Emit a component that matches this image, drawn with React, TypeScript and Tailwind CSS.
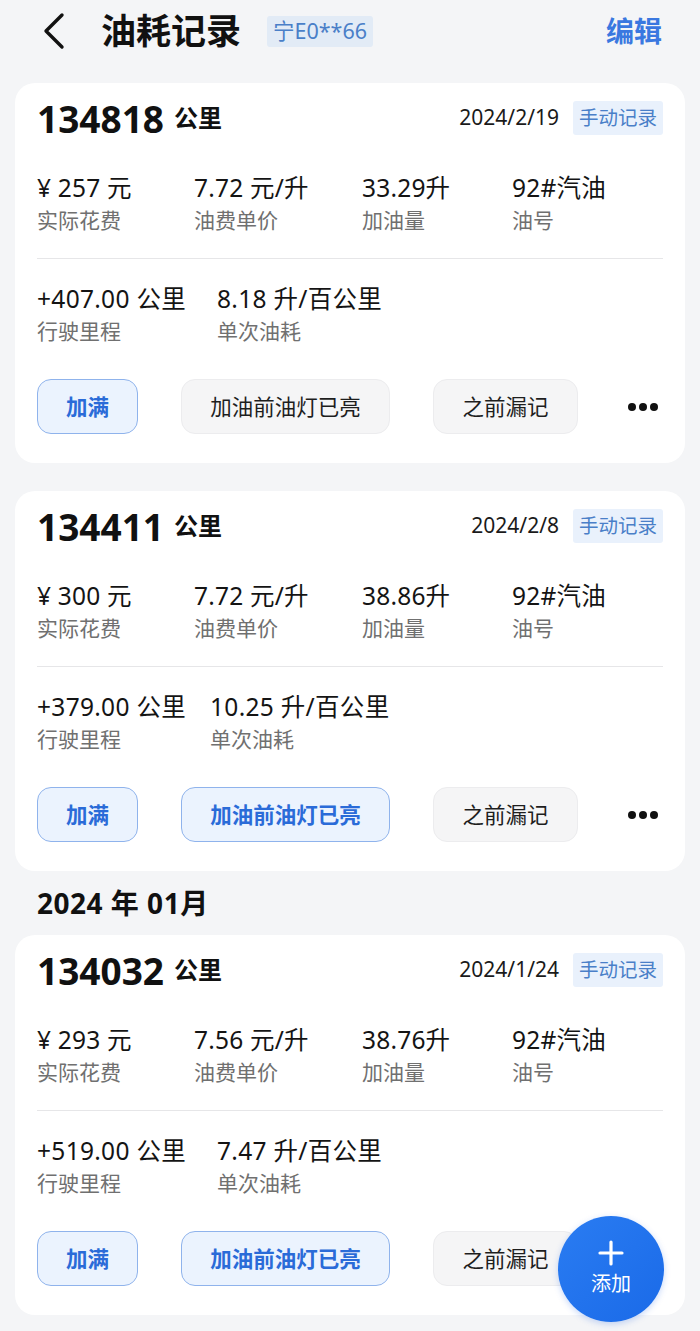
import React from "react";

type Rec = {
  km: string;
  date: string;
  stats: [string, string][];
  dist: string;
  cons: string;
  consGap: string;
  lampOn: boolean;
};

const recs: Rec[] = [
  {
    km: "134818",
    date: "2024/2/19",
    stats: [
      ["¥ 257 元", "实际花费"],
      ["7.72 元/升", "油费单价"],
      ["33.29升", "加油量"],
      ["92#汽油", "油号"],
    ],
    dist: "+407.00 公里",
    cons: "8.18 升/百公里",
    consGap: "gap-[31px]",
    lampOn: false,
  },
  {
    km: "134411",
    date: "2024/2/8",
    stats: [
      ["¥ 300 元", "实际花费"],
      ["7.72 元/升", "油费单价"],
      ["38.86升", "加油量"],
      ["92#汽油", "油号"],
    ],
    dist: "+379.00 公里",
    cons: "10.25 升/百公里",
    consGap: "gap-[24px]",
    lampOn: true,
  },
  {
    km: "134032",
    date: "2024/1/24",
    stats: [
      ["¥ 293 元", "实际花费"],
      ["7.56 元/升", "油费单价"],
      ["38.76升", "加油量"],
      ["92#汽油", "油号"],
    ],
    dist: "+519.00 公里",
    cons: "7.47 升/百公里",
    consGap: "gap-[31px]",
    lampOn: true,
  },
];

const font = {
  fontFamily: '"Noto Sans", "Noto Sans CJK SC", sans-serif',
};

function Btn({ active, children, w }: { active: boolean; children: React.ReactNode; w: string }) {
  return (
    <div
      className={
        "h-[55px] rounded-[14px] flex items-center justify-center text-[21.5px] leading-none border " +
        w +
        " " +
        (active
          ? "bg-[#ebf3fe] border-[#8fb3ec] text-[#2a6bd8] font-semibold"
          : "bg-[#f5f5f6] border-[#ececee] text-[#1e1e1e]")
      }
    >
      {children}
    </div>
  );
}

function Card({ r }: { r: Rec }) {
  return (
    <div className="bg-white rounded-[20px] h-[380px] px-[22px] flex flex-col">
      <div className="h-[70px] flex items-center justify-between">
        <div className="flex items-center gap-[10px] text-[#111]">
          <span className="text-[37px] font-bold leading-none">{r.km}</span>
          <span className="text-[24px] font-bold leading-none">公里</span>
        </div>
        <div className="flex items-center gap-[14px]">
          <span className="text-[21px] text-[#1a1a1a]">{r.date}</span>
          <span className="h-[34px] px-[6px] flex items-center bg-[#e9f1fc] text-[#4a7fc8] text-[19.5px] rounded-[3px]">
            手动记录
          </span>
        </div>
      </div>
      <div className="grid grid-cols-[157px_168px_150px_1fr] mt-[19px]">
        {r.stats.map(([v, l], i) => (
          <div key={i} className="flex flex-col">
            <span className="text-[24.5px] leading-[32px] text-[#141414] tracking-[0.2px] whitespace-nowrap">{v}</span>
            <span className="text-[21px] leading-[32px] text-[#707070]">{l}</span>
          </div>
        ))}
      </div>
      <div className="h-px bg-[#e6e6e8] mt-[22px]" />
      <div className={"flex mt-[24px] " + r.consGap}>
        <div className="flex flex-col">
          <span className="text-[24.5px] leading-[32px] text-[#141414] tracking-[0.3px] whitespace-nowrap">{r.dist}</span>
          <span className="text-[21px] leading-[32px] text-[#707070]">行驶里程</span>
        </div>
        <div className="flex flex-col">
          <span className="text-[24.5px] leading-[32px] text-[#141414] tracking-[0.3px] whitespace-nowrap">{r.cons}</span>
          <span className="text-[21px] leading-[32px] text-[#707070]">单次油耗</span>
        </div>
      </div>
      <div className="flex items-center mt-[32px] gap-[43px]">
        <Btn active={true} w="w-[101px]">加满</Btn>
        <Btn active={r.lampOn} w="w-[209px]">加油前油灯已亮</Btn>
        <Btn active={false} w="w-[145px]">之前漏记</Btn>
        <div className="flex gap-[3px] ml-[7px]">
          <span className="w-[8px] h-[8px] rounded-full bg-[#111]" />
          <span className="w-[8px] h-[8px] rounded-full bg-[#111]" />
          <span className="w-[8px] h-[8px] rounded-full bg-[#111]" />
        </div>
      </div>
    </div>
  );
}

export default function App() {
  return (
    <div className="w-[700px] h-[1331px] bg-[#f4f5f7] overflow-hidden relative" style={font}>
      <div className="h-[62px] flex items-center px-[40px]">
        <svg width="26" height="38" viewBox="0 0 26 38" className="mr-[35px]">
          <path d="M22 3 L6 19 L22 35" stroke="#111" strokeWidth="3.4" fill="none" strokeLinecap="round" strokeLinejoin="round" />
        </svg>
        <span className="text-[35px] font-bold text-[#111]">油耗记录</span>
        <span className="ml-[26px] h-[31px] px-[6px] flex items-center bg-[#e2ebf6] text-[#4a7fc8] text-[21.5px] rounded-[3px]">
          宁E0**66
        </span>
        <span className="ml-auto text-[28px] font-bold text-[#3a78e0] mr-[-2px]">编辑</span>
      </div>
      <div className="px-[15px] mt-[21px] flex flex-col">
        <Card r={recs[0]} />
        <div className="h-[28px]" />
        <Card r={recs[1]} />
        <div className="h-[64px] flex items-center px-[22px] text-[28px] font-bold text-[#111] tracking-[0.5px]">
          2024 年 01月
        </div>
        <Card r={recs[2]} />
      </div>
      <div className="absolute left-[558px] top-[1216px] w-[106px] h-[106px] rounded-full bg-gradient-to-br from-[#2a7cf2] to-[#1a6ae8] flex flex-col items-center justify-center shadow-[0_2px_6px_rgba(30,100,230,0.25)]">
        <svg width="26" height="26" viewBox="0 0 26 26" className="mt-[-4px]">
          <path d="M13 2 V24 M2 13 H24" stroke="white" strokeWidth="3.2" strokeLinecap="round" />
        </svg>
        <span className="text-white text-[20px] mt-[8px] leading-none">添加</span>
      </div>
    </div>
  );
}
